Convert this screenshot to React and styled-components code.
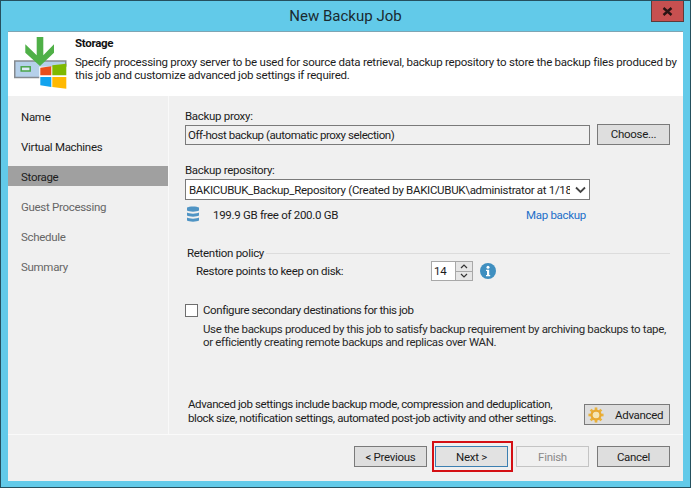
import React from 'react';
import styled, { createGlobalStyle } from 'styled-components';

const GlobalStyle = createGlobalStyle`
  html, body {
    margin: 0;
    padding: 0;
    background: #62cae9;
  }
  body {
    font-family: Roboto, "Liberation Sans", sans-serif;
    font-size: 11.5px;
    letter-spacing: -0.3px;
    color: #1c1c1c;
  }
`;

const Window = styled.div`
  box-sizing: border-box;
  width: 691px;
  height: 488px;
  border: 1px solid #25505f;
  background: #62cae9;
  display: flex;
  flex-direction: column;
  padding: 0 7px 6px;
`;

const TitleBar = styled.div`
  position: relative;
  height: 30px;
  flex: none;
  display: flex;
  align-items: center;
  justify-content: center;
  font-size: 15px;
  letter-spacing: 0;
  color: #1a2a30;
`;

const CloseButton = styled.div`
  position: absolute;
  top: 0;
  right: -1px;
  width: 33px;
  height: 21px;
  box-sizing: border-box;
  background: #c75050;
  border: 1px solid #5d3a3a;
  border-top: none;
  display: flex;
  align-items: center;
  justify-content: center;
`;

const Body = styled.div`
  flex: 1;
  min-height: 0;
  display: flex;
  flex-direction: column;
  border-top: 1px solid #7fa5b3;
  background: #f0f0f0;
`;

const Header = styled.div`
  height: 64px;
  flex: none;
  background: #fff;
  display: flex;
  padding-left: 6px;
`;

const HeaderIcon = styled.svg`
  width: 53px;
  height: 53px;
  margin-top: 5px;
  flex: none;
`;

const HeaderText = styled.div`
  margin-left: 8px;
  padding-top: 4px;
`;

const HeaderTitle = styled.div`
  font-weight: 700;
  line-height: 14px;
  color: #111;
`;

const HeaderDesc = styled.div`
  margin-top: 6px;
  line-height: 13px;
  width: 606px;
  letter-spacing: -0.23px;
`;

const Middle = styled.div`
  flex: 1;
  min-height: 0;
  display: flex;
`;

const Sidebar = styled.div`
  width: 160px;
  flex: none;
  padding-top: 10px;
  border-right: 1px solid #f9f9f9;
`;

const StepItem = styled.div`
  box-sizing: border-box;
  height: 20px;
  margin-bottom: 10px;
  padding: 1px 0 0 13px;
  display: flex;
  align-items: center;
  background: ${(p) => (p.$active ? '#a0a0a0' : 'transparent')};
  color: ${(p) => (p.$muted ? '#666' : '#1c1c1c')};
`;

const Main = styled.div`
  flex: 1;
  min-width: 0;
  padding: 13px 13px 0 16px;
  display: flex;
  flex-direction: column;
`;

const FieldLabel = styled.div`
  line-height: 14px;
  margin-top: ${(p) => p.$gap || 0}px;
`;

const Row = styled.div`
  display: flex;
  align-items: center;
  gap: 7px;
`;

const ProxyBox = styled.div`
  box-sizing: border-box;
  width: 405px;
  height: 20px;
  margin-top: 2px;
  border: 1px solid #7a7a7a;
  background: #f0f0f0;
  padding-left: 2px;
  line-height: 18px;
  letter-spacing: -0.42px;
`;

const PushButton = styled.div`
  box-sizing: border-box;
  width: ${(p) => p.$width || 73}px;
  height: 21px;
  border: 1px solid ${(p) => (p.$disabled ? '#c4c4c4' : p.$focus ? '#3c7fb1' : '#7a7a7a')};
  background: ${(p) => (p.$disabled ? '#f0f0f0' : p.$focus ? '#e2e2e2' : '#dedede')};
  color: ${(p) => (p.$disabled ? '#8a8a8a' : '#1c1c1c')};
  display: flex;
  align-items: center;
  justify-content: center;
  position: relative;
  flex: none;
`;

const RepoSelect = styled.div`
  box-sizing: border-box;
  width: 405px;
  height: 21px;
  margin-top: 2px;
  border: 1px solid #7a7a7a;
  background: #fff;
  padding: 1px 0 0 3px;
  display: flex;
  align-items: center;
  justify-content: space-between;
  white-space: nowrap;
`;

const RepoValue = styled.div`
  width: 381px;
  overflow: hidden;
`;

const FreeRow = styled.div`
  display: flex;
  align-items: center;
  height: 16px;
  margin-top: 6px;
  padding-left: 2px;
`;

const FreeText = styled.div`
  margin: 2px 0 0 14px;
  width: 313px;
`;

const MapLink = styled.div`
  color: #1c6fc9;
  margin-top: 2px;
`;

const GroupLegend = styled.div`
  display: flex;
  align-items: center;
  gap: 2px;
  margin-top: 24px;
  padding-left: 2px;
  line-height: 14px;
`;

const GroupLine = styled.div`
  flex: 1;
  height: 1px;
  background: #dcdcdc;
`;

const RetentionRow = styled.div`
  display: flex;
  align-items: center;
  height: 20px;
  padding-left: 11px;
  margin-top: 1px;
`;

const RetentionLabel = styled.div`
  width: 235px;
`;

const Spinner = styled.div`
  box-sizing: border-box;
  width: 42px;
  height: 20px;
  border: 1px solid #a8a8a8;
  background: #fff;
  display: flex;
  justify-content: space-between;
  padding-left: 2px;
  line-height: 18px;
`;

const SpinButtons = styled.div`
  width: 16px;
  display: flex;
  flex-direction: column;
  border-left: 1px solid #a8a8a8;
`;

const SpinButton = styled.div`
  flex: 1;
  background: #e6e6e6;
  display: flex;
  align-items: center;
  justify-content: center;
  & + & {
    border-top: 1px solid #a8a8a8;
  }
`;

const InfoIcon = styled.svg`
  width: 16px;
  height: 16px;
  margin-left: 7px;
`;

const CheckRow = styled.div`
  display: flex;
  align-items: center;
  gap: 5px;
  margin-top: 22px;
  line-height: 14px;
  letter-spacing: -0.42px;
`;

const CheckBox = styled.div`
  box-sizing: border-box;
  width: 13px;
  height: 13px;
  border: 1px solid #6e6e6e;
  background: #fff;
`;

const CheckHint = styled.div`
  margin: 6px 0 0 18px;
  line-height: 13px;
  color: #2a2a2a;
  width: 470px;
  letter-spacing: -0.35px;
`;

const AdvancedRow = styled.div`
  margin-top: auto;
  display: flex;
  justify-content: space-between;
  align-items: flex-end;
  padding: 0 0 9px 3px;
`;

const AdvancedText = styled.div`
  line-height: 14px;
  white-space: nowrap;
  letter-spacing: -0.4px;
`;

const AdvancedButton = styled(PushButton)`
  justify-content: flex-start;
  padding-left: 3px;
  gap: 11px;
`;

const Footer = styled.div`
  height: 47px;
  flex: none;
  box-sizing: border-box;
  border-top: 1px solid #fafafa;
  display: flex;
  justify-content: flex-end;
  align-items: flex-start;
  gap: 8px;
  padding: 11px 13px 0 0;
`;

const Highlight = styled.div`
  position: absolute;
  top: -6px;
  left: -4px;
  width: 81px;
  height: 31px;
  box-sizing: border-box;
  border: 2px solid #d40f14;
  pointer-events: none;
`;

const steps = [
  { name: 'Name' },
  { name: 'Virtual Machines' },
  { name: 'Storage', active: true },
  { name: 'Guest Processing', muted: true },
  { name: 'Schedule', muted: true },
  { name: 'Summary', muted: true },
];

const gearTeeth = [0, 45, 90, 135, 180, 225, 270, 315];

const App = () => (
  <>
    <GlobalStyle />
    <Window>
      <TitleBar>
        New Backup Job
        <CloseButton>
          <svg width="11" height="9" viewBox="0 0 11 9">
            <path d="M1.5 1l8 7M9.5 1l-8 7" stroke="#2a1414" strokeWidth="2.4" />
          </svg>
        </CloseButton>
      </TitleBar>
      <Body>
        <Header>
          <HeaderIcon viewBox="0 0 53 53">
            <rect x="0.75" y="24" width="51" height="16.5" fill="#b5d0ea" stroke="#858a90" strokeWidth="1.5" />
            <rect x="7.2" y="29.8" width="9" height="4.2" fill="#dfeaf5" stroke="#4aa54a" strokeWidth="1.5" />
            <path d="M11.3 7.3L22.7 18.3V0H29.3V18.3L40 7.3V15.7L26 29L11.3 15.7z" fill="#4fb047" />
            <path d="M25.3 29.7H53V53H25.3z" fill="#fff" />
            <path d="M26.3 30.7L37.3 29.3V38.3H26.3z" fill="#ea4e1b" />
            <path d="M38.3 28.3L52.3 26.7V38.3H38.3z" fill="#7fb900" />
            <path d="M26.3 40H37.3V50L26.3 48.3z" fill="#12a3ee" />
            <path d="M38.3 40H52.3V51.7L38.3 50z" fill="#ffb901" />
          </HeaderIcon>
          <HeaderText>
            <HeaderTitle>Storage</HeaderTitle>
            <HeaderDesc>
              Specify processing proxy server to be used for source data retrieval, backup repository to store the backup files produced by this job and customize advanced job settings if required.
            </HeaderDesc>
          </HeaderText>
        </Header>
        <Middle>
          <Sidebar>
            {steps.map((s) => (
              <StepItem key={s.name} $active={s.active} $muted={s.muted}>{s.name}</StepItem>
            ))}
          </Sidebar>
          <Main>
            <FieldLabel>Backup proxy:</FieldLabel>
            <Row>
              <ProxyBox>Off-host backup (automatic proxy selection)</ProxyBox>
              <PushButton>Choose...</PushButton>
            </Row>
            <FieldLabel $gap={18}>Backup repository:</FieldLabel>
            <RepoSelect>
              <RepoValue>BAKICUBUK_Backup_Repository (Created by BAKICUBUK\administrator at 1/18/2017 3:22 PM)</RepoValue>
              <svg width="17" height="10" viewBox="0 0 17 10">
                <path d="M4 2.5l4.5 4.5L13 2.5" fill="none" stroke="#444" strokeWidth="1.8" />
              </svg>
            </RepoSelect>
            <FreeRow>
              <svg width="12" height="16" viewBox="0 0 12 16">
                <path d="M0 1.5C2 0 10 0 12 1.5V4.5C10 6 2 6 0 4.5z" fill="#4f94c4" />
                <path d="M0 6.5C2 8 10 8 12 6.5V9.5C10 11 2 11 0 9.5z" fill="#4f94c4" />
                <path d="M0 11.5C2 13 10 13 12 11.5V14.5C10 16 2 16 0 14.5z" fill="#4f94c4" />
              </svg>
              <FreeText>199.9 GB free of 200.0 GB</FreeText>
              <MapLink>Map backup</MapLink>
            </FreeRow>
            <GroupLegend>
              Retention policy
              <GroupLine />
            </GroupLegend>
            <RetentionRow>
              <RetentionLabel>Restore points to keep on disk:</RetentionLabel>
              <Spinner>
                14
                <SpinButtons>
                  <SpinButton>
                    <svg width="8" height="5" viewBox="0 0 8 5">
                      <path d="M1 4l3-3 3 3" fill="none" stroke="#333" strokeWidth="1.2" />
                    </svg>
                  </SpinButton>
                  <SpinButton>
                    <svg width="8" height="5" viewBox="0 0 8 5">
                      <path d="M1 1l3 3 3-3" fill="none" stroke="#333" strokeWidth="1.2" />
                    </svg>
                  </SpinButton>
                </SpinButtons>
              </Spinner>
              <InfoIcon viewBox="0 0 16 16">
                <circle cx="8" cy="8" r="8" fill="#3f8fc0" />
                <circle cx="8" cy="4.2" r="1.5" fill="#fff" />
                <path d="M6 6.8h3.2v5.2h1v1.2H6V12h1V8H6z" fill="#fff" />
              </InfoIcon>
            </RetentionRow>
            <CheckRow>
              <CheckBox />
              Configure secondary destinations for this job
            </CheckRow>
            <CheckHint>
              Use the backups produced by this job to satisfy backup requirement by archiving backups to tape, or efficiently creating remote backups and replicas over WAN.
            </CheckHint>
            <AdvancedRow>
              <AdvancedText>
                Advanced job settings include backup mode, compression and deduplication,<br />
                block size, notification settings, automated post-job activity and other settings.
              </AdvancedText>
              <AdvancedButton $width={86}>
                <svg width="16" height="16" viewBox="0 0 18 18">
                  {gearTeeth.map((a) => (
                    <rect key={a} x="7.5" y="0.5" width="3" height="4" fill="#e9b23c" transform={`rotate(${a} 9 9)`} />
                  ))}
                  <circle cx="9" cy="9" r="5" fill="none" stroke="#e9a92f" strokeWidth="2.5" />
                  <circle cx="9" cy="9" r="3.5" fill="#f7e6b0" />
                </svg>
                Advanced
              </AdvancedButton>
            </AdvancedRow>
          </Main>
        </Middle>
        <Footer>
          <PushButton>&lt; Previous</PushButton>
          <PushButton $focus>
            Next &gt;
            <Highlight />
          </PushButton>
          <PushButton $disabled>Finish</PushButton>
          <PushButton>Cancel</PushButton>
        </Footer>
      </Body>
    </Window>
  </>
);

export default App;
